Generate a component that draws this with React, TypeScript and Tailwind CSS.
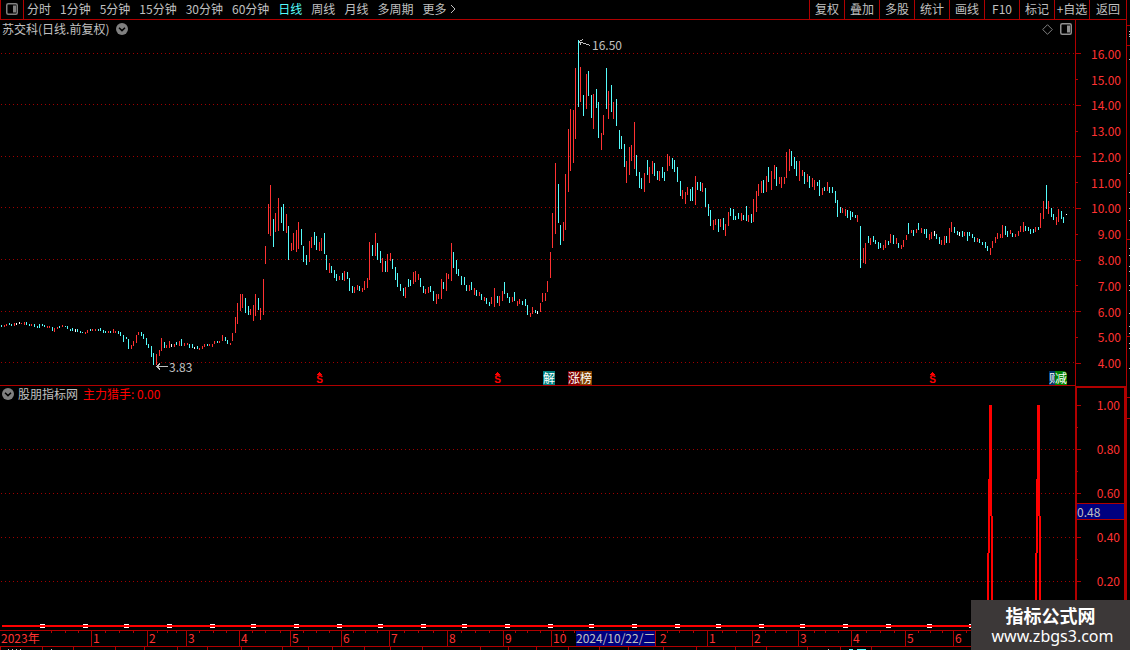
import { useState } from 'react';

type Kind = 'u' | 'd' | 'w';

// x, high, low, kind (u = up, d = down, w = flat)
const CANDLES = `
1 325 327 d,4 325 327 u,6 324 326 u,9 323 325 d,11 324 326 d,14 323 326 u,16 323 325 w,19 322 324 w,21 323 324 u,24 322 325 u,
26 322 325 d,29 324 326 d,31 324 326 u,34 324 327 d,37 326 328 d,39 324 328 d,42 324 326 d,44 325 327 d,47 326 328 u,49 326 328 u,
52 327 331 d,54 328 332 u,57 327 329 u,59 326 328 d,62 325 327 u,65 326 327 d,67 326 329 d,70 329 331 d,72 328 331 d,75 329 332 w,
77 329 332 d,80 331 333 d,82 332 333 d,85 332 334 u,87 330 333 u,90 329 331 d,92 329 331 u,95 329 331 u,98 329 331 d,100 328 331 d,
103 330 333 d,105 331 333 d,108 331 333 u,110 331 333 d,113 329 333 u,115 331 333 u,118 331 334 d,120 332 336 d,123 335 342 d,126 337 339 d,
128 339 349 d,131 345 349 u,133 341 346 u,136 335 343 u,138 332 335 u,141 332 336 d,143 334 339 d,146 338 345 d,148 344 348 d,151 346 357 d,
153 353 365 d,156 354 365 u,159 350 356 u,161 338 351 u,164 342 348 d,166 345 348 u,169 341 348 u,171 344 347 w,174 344 347 u,176 342 345 d,
179 341 346 u,181 339 346 d,184 343 346 u,187 343 345 u,189 344 348 d,192 344 348 d,194 347 349 w,197 346 349 d,199 348 350 u,202 346 349 u,
204 344 347 u,207 344 346 d,209 344 346 u,212 344 347 u,214 341 344 u,217 341 343 d,219 341 343 u,222 335 341 u,225 337 341 d,227 340 344 d,
230 343 345 u,232 333 341 u,235 317 333 u,237 303 324 u,240 294 311 u,242 294 308 u,245 298 313 d,248 306 315 d,250 309 315 u,253 305 321 u,
255 294 316 u,258 298 310 d,260 308 320 u,263 279 315 u,265 246 264 u,268 204 234 u,270 185 236 u,273 219 247 d,275 213 232 u,278 198 231 u,
281 207 223 d,283 204 231 d,286 214 233 u,288 226 260 d,291 243 251 u,293 233 250 u,296 230 252 u,298 222 249 u,301 229 245 d,303 246 262 d,
306 255 265 d,309 241 262 u,311 237 248 u,314 232 245 d,316 236 250 d,319 242 251 u,321 238 251 u,324 233 254 d,326 255 270 d,329 263 273 u,
331 266 273 d,334 270 278 d,336 274 281 d,339 276 280 u,342 273 280 d,344 271 281 u,347 272 279 d,349 278 291 d,352 286 293 d,354 287 293 u,
357 285 290 u,359 286 291 d,362 288 292 u,364 281 290 u,367 278 288 u,369 242 280 u,372 245 256 d,375 233 256 u,377 243 260 d,380 251 263 d,
382 258 272 u,385 261 272 d,387 254 272 u,390 253 261 u,392 259 269 d,395 267 280 d,397 273 287 d,400 284 291 d,403 288 296 d,405 287 298 u,
408 279 287 d,410 280 286 d,413 272 284 u,415 271 282 u,418 274 280 u,420 278 287 d,423 286 293 d,425 289 294 u,428 287 293 u,430 286 292 d,
433 291 301 d,436 294 304 u,438 294 299 u,441 279 299 u,443 282 289 d,446 273 291 u,448 274 279 u,451 243 281 u,453 252 268 d,456 260 274 d,
458 269 276 d,461 276 285 d,464 277 285 d,466 285 291 d,469 285 291 u,471 282 290 d,474 288 295 u,476 290 296 d,479 292 296 u,481 294 300 d,
484 297 301 u,486 298 304 d,489 302 306 d,491 297 304 u,494 288 307 u,497 296 303 d,499 296 306 u,502 291 301 u,504 282 294 d,507 293 298 d,
509 297 303 d,512 297 302 u,514 292 301 d,517 301 306 u,519 299 304 u,522 301 305 d,525 299 306 d,527 305 315 d,530 313 317 u,532 307 314 u,
535 310 313 d,537 311 314 w,540 303 312 u,542 293 302 u,545 293 301 u,547 281 292 u,550 252 278 u,552 213 248 u,555 163 234 u,558 184 223 d,
560 225 245 d,563 222 241 u,565 174 230 u,568 129 192 u,570 109 171 u,573 110 163 u,575 68 139 u,578 40 107 d,580 67 102 u,583 95 116 d,
586 74 109 u,588 71 96 d,591 95 118 d,593 94 129 u,596 89 108 d,598 102 138 d,601 133 150 u,603 115 135 u,606 68 109 d,608 91 119 u,
611 85 112 d,613 102 119 u,616 99 126 d,619 130 149 d,621 136 149 d,624 144 167 d,626 161 183 u,629 147 175 u,631 145 161 u,634 122 169 u,
636 155 176 d,639 172 188 d,641 178 189 d,644 173 192 u,647 160 175 d,649 167 183 u,652 161 174 u,654 163 176 d,657 171 180 d,659 171 181 u,
662 167 178 d,664 172 181 d,667 154 171 u,669 156 166 u,672 158 169 d,674 160 172 d,677 167 182 d,680 181 196 d,682 190 199 u,685 192 204 u,
687 187 195 u,690 189 201 d,692 187 201 d,695 176 205 u,697 182 190 d,700 182 191 d,702 183 192 u,705 188 207 d,708 204 216 d,710 210 226 d,
713 220 230 u,715 219 225 u,718 219 232 d,720 219 227 u,723 218 230 d,725 224 236 u,728 212 226 u,730 208 216 d,733 209 220 d,735 216 220 d,
738 213 219 d,741 213 221 u,743 215 220 d,746 206 221 d,748 215 222 u,751 214 223 d,753 199 222 u,756 191 212 u,758 184 196 u,761 181 193 u,
763 180 193 d,766 176 192 u,768 167 182 d,771 171 190 u,774 165 179 u,776 167 186 d,779 177 184 u,781 177 188 u,784 177 184 u,786 152 178 u,
789 149 171 u,791 151 166 d,794 157 169 d,796 161 176 d,799 161 181 u,802 170 176 u,804 172 184 d,807 174 182 u,809 176 188 d,812 178 187 u,
814 180 190 u,817 182 186 d,819 180 196 d,822 188 195 u,824 187 191 d,827 182 191 u,829 187 193 d,832 187 193 d,835 191 203 d,837 200 217 d,
840 207 213 d,842 208 213 u,845 209 216 u,847 210 218 d,850 211 220 d,852 212 217 d,855 215 218 d,857 215 222 u,860 226 268 d,863 248 263 u,
865 243 264 u,868 236 243 d,870 238 245 u,873 236 242 d,875 240 244 d,878 242 249 d,880 243 248 d,883 245 250 u,885 240 248 u,888 241 245 d,
890 234 243 u,893 235 244 d,896 238 244 u,898 243 248 d,901 245 249 u,903 240 247 u,906 235 240 u,908 223 234 d,911 230 233 u,913 230 236 d,
916 229 233 u,918 223 230 d,921 228 233 u,924 229 234 d,926 229 238 d,929 234 240 u,931 232 239 u,934 231 236 w,936 234 239 d,939 237 244 d,
941 240 245 u,944 236 245 u,946 236 243 d,949 228 243 u,951 222 232 u,954 227 233 d,957 231 235 d,959 232 236 w,962 231 237 d,964 232 236 u,
967 232 241 d,969 232 236 d,972 234 238 d,974 237 242 d,977 238 242 u,979 239 243 d,982 242 245 d,985 242 248 d,987 246 251 d,990 248 255 u,
992 241 248 u,995 237 243 u,997 233 239 u,1000 234 238 u,1002 225 238 u,1005 226 235 d,1007 231 237 d,1010 230 234 u,1012 233 237 d,1015 234 237 u,
1018 231 236 u,1020 226 232 u,1023 222 232 u,1025 226 231 d,1028 227 231 d,1030 229 234 d,1033 229 233 d,1035 227 232 u,1038 227 230 d,1040 213 228 u,
1043 201 219 u,1046 185 209 d,1048 201 214 u,1051 208 217 d,1053 214 220 d,1056 217 225 u,1058 209 222 u,1061 211 219 d,1063 217 223 d,1066 214 215 w
`
    .trim()
    .split(/,\s*/)
    .map(row => {
        const [x, high, low, kind] = row.split(' ');
        return { x: +x, high: +high, low: +low, kind: kind as Kind };
    });

const COLORS: Record<Kind, string> = { u: '#ff3232', d: '#54fcfc', w: '#ffffff' };

const PERIODS = ['分时', '1分钟', '5分钟', '15分钟', '30分钟', '60分钟', '日线', '周线', '月线', '多周期'];
const TOOLS = ['复权', '叠加', '多股', '统计', '画线', 'F10', '标记', '+自选', '返回'];
const PRICES = ['16.00', '15.00', '14.00', '13.00', '12.00', '11.00', '10.00', '9.00', '8.00', '7.00', '6.00', '5.00', '4.00'];
const LEVELS = ['1.00', '', '0.80', '', '0.60', '', '0.40', '', '0.20'];

const MAIN_GRID = [53, 104, 156, 207, 259, 311, 362];
const SUB_GRID = [449, 493, 537, 581];

const MONTHS = [
    { label: '2023年', width: 91 },
    { label: '1', width: 56 },
    { label: '2', width: 39 },
    { label: '3', width: 53 },
    { label: '4', width: 51 },
    { label: '5', width: 51 },
    { label: '6', width: 48 },
    { label: '7', width: 58 },
    { label: '8', width: 56 },
    { label: '9', width: 48 },
    { label: '10', width: 104 },
    { label: '2', width: 52, indent: true },
    { label: '1', width: 45 },
    { label: '2', width: 46 },
    { label: '3', width: 53 },
    { label: '4', width: 54 },
    { label: '5', width: 48 },
    { label: '6', width: 173 },
];

const WEEK_TICKS = [
    51, 65, 78, 105, 119, 133, 157, 167, 176, 199, 213, 226, 252, 265, 280, 303, 316, 329, 353, 365, 377, 404, 418, 433, 461, 475,
    489, 515, 527, 540, 563, 574, 667, 679, 693, 722, 736, 765, 775, 786, 814, 825, 838, 866, 880, 894, 918, 930, 942, 966,
];
const TAB_TICKS = [
    0, 42, 73, 115, 144, 177, 207, 241, 282, 308, 332, 364, 390, 422, 480, 508, 536, 568, 599, 628, 663, 696, 735, 766, 807, 840, 871,
];
const MARKS = [40, 83, 124, 167, 210, 251, 294, 337, 378, 421, 462, 505, 548, 589, 632, 675, 716, 759, 800, 843, 886, 927, 969];
const SIDE_DOTS = [31, 34, 36, 59, 173, 192, 208, 220, 248, 255, 266, 271, 285, 290, 313, 326, 333, 343, 348, 368];

const left = (x: number) => ({ left: `${(x / 1075) * 100}%` });
const top = (y: number) => `${((y - 20) / 365) * 100}%`;

function PanelIcon({ className }: { className: string }) {
    return (
        <svg className={className} width="12" height="12" viewBox="0 0 12 12" fill="none">
            <rect x="0.75" y="0.75" width="10.5" height="10.5" rx="1.5" stroke="currentColor" strokeWidth="1.5" />
            <rect x="7" y="2.5" width="3" height="7" fill="currentColor" />
        </svg>
    );
}

function CircleChevron() {
    return (
        <svg width="12" height="12" viewBox="0 0 12 12" fill="none">
            <circle cx="6" cy="6" r="6" fill="#808080" />
            <path d="M3 4.8 6 7.6 9 4.8" stroke="#000" strokeWidth="1.5" />
        </svg>
    );
}

function GridLines({ rows }: { rows: number[] }) {
    return (
        <>
            {rows.map(y => (
                <line key={y} x1="1" x2="1075" y1={y + 0.5} y2={y + 0.5} stroke="#a00000" strokeDasharray="1 3" />
            ))}
        </>
    );
}

function Signal({ x }: { x: number }) {
    return (
        <div className="absolute bottom-0 flex w-[7px] flex-col items-center text-[#ff0000]" style={left(x)}>
            <svg width="5" height="3" viewBox="0 0 5 3" fill="currentColor">
                <path d="M2 0h1v1h1v1h1v1H0V2h1V1h1z" />
            </svg>
            <span className="font-['Liberation_Sans',sans-serif] text-[10px] leading-[10px] font-bold">S</span>
        </div>
    );
}

function Header({ period, onSelect }: { period: string; onSelect: (p: string) => void }) {
    return (
        <header className="flex h-5 shrink-0 border-b border-[#b00000]">
            <button aria-label="侧栏" className="flex w-6 shrink-0 items-center justify-center border-x border-[#b00000] pb-px">
                <PanelIcon className="text-[#808080]" />
            </button>
            <nav className="flex items-center gap-[9px] pb-0.5 pl-[3px]">
                {PERIODS.map(p => (
                    <button
                        key={p}
                        onClick={() => onSelect(p)}
                        className={`whitespace-nowrap ${p === period ? 'text-[#54fcfc]' : 'text-[#c0c0c0]'}`}
                    >
                        {p}
                    </button>
                ))}
                <button className="flex items-center gap-1 whitespace-nowrap text-[#c0c0c0]">
                    更多
                    <svg width="6" height="10" viewBox="0 0 6 10" fill="none" stroke="currentColor">
                        <path d="M1 1l4 4-4 4" />
                    </svg>
                </button>
            </nav>
            <div className="ml-auto flex">
                {TOOLS.map(t => (
                    <button
                        key={t}
                        className="w-[35px] whitespace-nowrap border-l border-[#b00000] pb-0.5 text-center text-[#c0c0c0] last:w-[37px]"
                    >
                        {t}
                    </button>
                ))}
            </div>
        </header>
    );
}

function PriceChart() {
    return (
        <section className="relative min-h-0 border-b border-[#b00000]">
            <svg
                className="absolute inset-0 h-full w-full"
                viewBox="0 20 1075 365"
                preserveAspectRatio="none"
                shapeRendering="crispEdges"
            >
                <GridLines rows={MAIN_GRID} />
                {CANDLES.map(c => (
                    <rect key={c.x} x={c.x} y={c.high} width="1" height={c.low - c.high} fill={COLORS[c.kind]} />
                ))}
                <path d="M156 366.5h12M157 366.5l3-3M157 366.5l3 3" stroke="#c0c0c0" fill="none" />
                <path d="M579 41.5l11 4M579 41.5l4-2M579 41.5l2 3" stroke="#c0c0c0" fill="none" />
            </svg>

            <div className="relative flex items-center justify-between pl-0.5 pr-[3px] text-[#c0c0c0]">
                <h1 className="flex items-center gap-[7px] leading-[18px]">
                    苏交科(日线.前复权)
                    <CircleChevron />
                </h1>
                <div className="flex items-center gap-[7px] text-[#808080]">
                    <svg width="11" height="11" viewBox="0 0 11 11" fill="none" stroke="currentColor">
                        <path d="M5.5.7l4.8 4.8-4.8 4.8L.7 5.5z" />
                    </svg>
                    <PanelIcon className="text-[#909090]" />
                </div>
            </div>

            <span className="absolute -translate-y-1/2 leading-4 text-[#c0c0c0]" style={{ ...left(592), top: top(45) }}>
                16.50
            </span>
            <span className="absolute -translate-y-1/2 leading-4 text-[#c0c0c0]" style={{ ...left(169), top: top(367) }}>
                3.83
            </span>

            <Signal x={316} />
            <Signal x={494} />
            <Signal x={929} />
            <div className="absolute bottom-0 flex leading-[14px] text-white" style={left(543)}>
                <span className="bg-[#008080]">解</span>
            </div>
            <div className="absolute bottom-0 flex leading-[14px] text-white" style={left(568)}>
                <span className="bg-[#800000]">涨</span>
                <span className="bg-[#804000]">榜</span>
            </div>
            <div className="absolute bottom-0 flex leading-[14px] text-white" style={left(1049)}>
                <span className="w-[6px] overflow-hidden bg-[#003366]">财</span>
                <span className="rounded-tr bg-[#008000]">减</span>
            </div>
        </section>
    );
}

function IndicatorChart() {
    const spike = (x: number) => `M${x + 2} 405h3v111h1v110h-2V516h-1v37h-1v73h-2v-73h1v-74h1z`;

    return (
        <section className="relative min-h-0">
            <svg
                className="absolute inset-0 h-full w-full"
                viewBox="0 386 1075 244"
                preserveAspectRatio="none"
                shapeRendering="crispEdges"
            >
                <GridLines rows={SUB_GRID} />
                <path d={spike(987)} fill="#ff0000" />
                <path d={spike(1035)} fill="#ff0000" />
                <rect x="2" y="625" width="1073" height="2" fill="#ff0000" />
                {MARKS.map(x => (
                    <path key={x} d={`M${x} 624h5v1h-5zM${x} 627h5v1h-5z`} fill="#fff" />
                ))}
            </svg>
            <h2 className="relative flex items-center pl-0.5 leading-4">
                <CircleChevron />
                <span className="ml-1 text-[#c0c0c0]">股朋指标网</span>
                <span className="ml-[5px] text-[#ff0000]">主力猎手: 0.00</span>
            </h2>
        </section>
    );
}

function PriceAxis() {
    return (
        <div className="flex min-h-0 flex-col border-l border-[#b00000] pb-2.5 pt-[21px] text-[#ff3232]">
            {PRICES.map((p, i) => (
                <div key={p} className="flex min-h-0 flex-1 items-center justify-between pr-[5px]">
                    <span className={`h-px bg-[#b00000] ${i % 2 === 0 ? 'w-[5px]' : 'w-0.5'}`} />
                    <span className="leading-4">{p}</span>
                </div>
            ))}
        </div>
    );
}

function LevelAxis() {
    return (
        <div className="relative flex min-h-0 flex-col border-2 border-b-0 border-[#b00000] pb-[38px] pt-1.5 text-[#ff3232]">
            {LEVELS.map((l, i) => (
                <div key={i} className="flex min-h-0 flex-1 items-center justify-between pr-1">
                    <span className={`h-px bg-[#b00000] ${l ? 'w-1' : 'w-px'}`} />
                    <span className="leading-4">{l}</span>
                </div>
            ))}
            <div className="absolute inset-x-0 top-[47.5%] h-[17px] border-y border-[#b00000] bg-[#000080] leading-[15px] text-[#c0c0c0]">
                0.48
            </div>
        </div>
    );
}

function TimeAxis() {
    return (
        <footer className="relative shrink-0 text-[#ff3232]">
            <div
                className="grid h-[17px] border-y border-[#b00000] leading-[14px]"
                style={{ gridTemplateColumns: MONTHS.map(m => `minmax(0, ${m.width}fr)`).join(' ') }}
            >
                {MONTHS.map((m, i) => (
                    <span
                        key={i}
                        className={`whitespace-nowrap ${m.indent ? 'pl-1' : 'pl-px'} ${i > 0 ? 'border-l border-[#b00000]' : ''}`}
                    >
                        {m.label}
                    </span>
                ))}
            </div>
            <svg
                className="absolute inset-0 h-full w-full"
                viewBox="0 630 1126 20"
                preserveAspectRatio="none"
                shapeRendering="crispEdges"
                fill="#b00000"
            >
                {WEEK_TICKS.map(x => (
                    <rect key={x} x={x} y="631" width="1" height="2" />
                ))}
                {TAB_TICKS.map(x => (
                    <rect key={x} x={x} y="647" width="1" height="3" />
                ))}
                <path d="M8 649h1v1h-1zM12 649h1v1h-1zM16 649h1v1h-1zM20 649h1v1h-1zM51 649h1v1h-1zM828 649h1v1h-1z" fill="#c0c0c0" />
                <path d="M849 649h4v1h-4zM857 649h9v1h-9z" fill="#54fcfc" />
            </svg>
            <div className="h-[3px]" />
            <time
                dateTime="2024-10-22"
                className="absolute top-px h-[15px] whitespace-nowrap bg-[#000080] leading-[14px] text-[#c0c0c0]"
                style={{ left: `${(576 / 1126) * 100}%` }}
            >
                2024/10/22/二
            </time>
        </footer>
    );
}

export default function App() {
    const [period, setPeriod] = useState('日线');

    return (
        <div className="relative flex h-screen overflow-hidden bg-black font-['Noto_Sans_CJK_SC',sans-serif] text-xs">
            <main className="flex min-w-0 flex-1 flex-col">
                <Header period={period} onSelect={setPeriod} />
                <div className="grid min-h-0 flex-1 grid-cols-[minmax(0,1fr)_51px] grid-rows-[minmax(0,366fr)_minmax(0,244fr)]">
                    <PriceChart />
                    <PriceAxis />
                    <IndicatorChart />
                    <LevelAxis />
                </div>
                <TimeAxis />
            </main>

            <aside className="w-1 shrink-0 border-l border-[#b00000]">
                <svg className="h-full w-full" viewBox="0 0 3 650" preserveAspectRatio="none" shapeRendering="crispEdges">
                    <path d="M0 25h3v1H0zM0 45h3v1H0zM0 239h3v1H0zM0 336h3v1H0zM0 397h3v1H0zM0 418h3v1H0z" fill="#b00000" />
                    {SIDE_DOTS.map(y => (
                        <rect key={y} x="2" y={y} width="1" height="1" fill="#c0c0c0" />
                    ))}
                </svg>
            </aside>

            {/* site watermark */}
            <div className="absolute bottom-0 right-0 flex h-[50px] w-[159px] flex-col items-center bg-[#3c3838] pt-1 text-white">
                <strong className="text-lg leading-[22px]">指标公式网</strong>
                <a href="#" className="pl-1 font-['Noto_Sans',sans-serif] text-base leading-5">www.zbgs3.com</a>
            </div>
        </div>
    );
}
